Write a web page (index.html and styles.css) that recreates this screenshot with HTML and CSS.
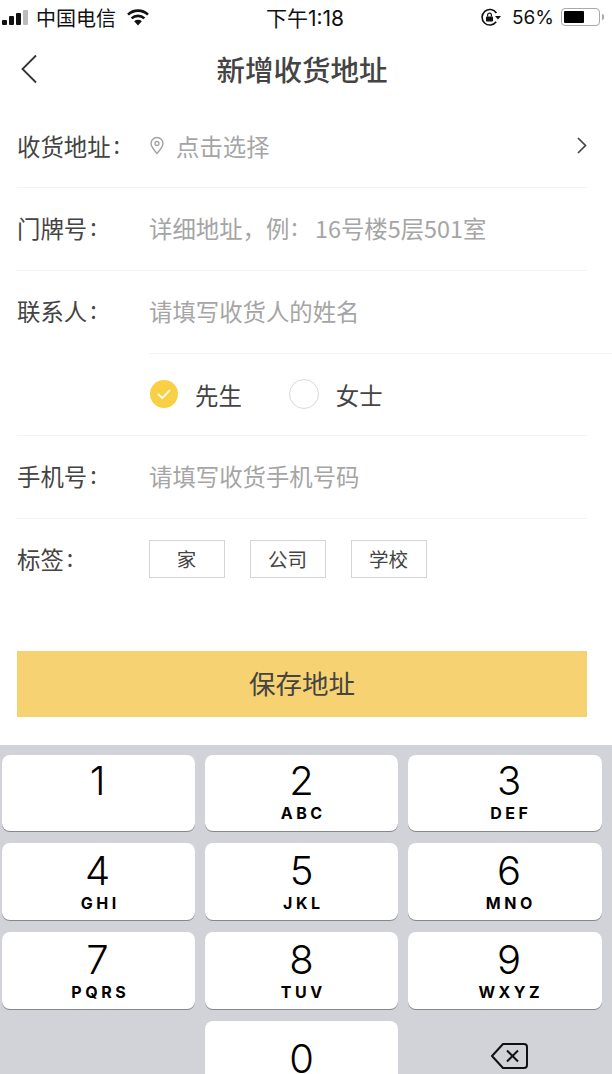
FILE: index.html
```html
<!DOCTYPE html>
<html lang="zh-CN">
<head>
  <meta charset="UTF-8" />
  <meta name="viewport" content="width=device-width, initial-scale=1.0"/>
  <title>新增收货地址</title>
  <link rel="stylesheet" href="styles.css">
</head>
<body>

  <div class="status-bar">
    <div class="status-left">
      <div class="signal">
        <span class="s1"></span><span class="s2"></span><span class="s3"></span><span class="s4"></span>
      </div>
      <span class="carrier">中国电信</span>
      <svg class="wifi" width="24" height="17" viewBox="0 0 24 17">
        <path d="M12 16.5 L8.2 12.2 A5.6 5.6 0 0 1 15.8 12.2 Z" fill="#111"/>
        <path d="M5.6 9.4 A9.4 9.4 0 0 1 18.4 9.4" fill="none" stroke="#111" stroke-width="2.6"/>
        <path d="M2 5.6 A14.6 14.6 0 0 1 22 5.6" fill="none" stroke="#111" stroke-width="2.6"/>
      </svg>
    </div>
    <div class="status-time">下午1:18</div>
    <div class="status-right">
      <svg class="lock" width="21" height="19" viewBox="0 0 21 19">
        <path d="M16.2 13.8 A7.8 7.8 0 1 1 16.4 5" fill="none" stroke="#111" stroke-width="1.6"/>
        <path d="M15 8 L21 8 L18 11.5 Z" fill="#111"/>
        <rect x="6" y="8.4" width="7" height="5.2" rx="0.8" fill="#111"/>
        <path d="M7.6 8.4 V7 A1.9 1.9 0 0 1 11.4 7 V8.4" fill="none" stroke="#111" stroke-width="1.2"/>
      </svg>
      <span class="battery-pct">56%</span>
      <div class="battery"><div class="battery-fill"></div></div>
      <span class="battery-tip"></span>
    </div>
  </div>

  <header class="nav">
    <svg class="back" width="18" height="30" viewBox="0 0 18 30">
      <path d="M16 1.5 L2.5 15 L16 28.5" fill="none" stroke="#333" stroke-width="1.8"/>
    </svg>
    <h1>新增收货地址</h1>
  </header>

  <div class="form">
    <div class="row">
      <div class="label">收货地址<span class="colon">:</span></div>
      <div class="value placeholder">
        <svg class="pin" width="16" height="19" viewBox="0 0 16 19">
          <path d="M8 17.5 C4.5 13.5 2 10.5 2 7.5 A6 6 0 0 1 14 7.5 C14 10.5 11.5 13.5 8 17.5 Z" fill="none" stroke="#a2a2a2" stroke-width="1.4"/>
          <circle cx="8" cy="7.5" r="2" fill="none" stroke="#a2a2a2" stroke-width="1.3"/>
        </svg>
        点击选择
      </div>
      <svg class="chevron" width="10" height="17" viewBox="0 0 10 17">
        <path d="M1 1 L8.5 8.5 L1 16" fill="none" stroke="#444" stroke-width="1.7"/>
      </svg>
    </div>
    <div class="row">
      <div class="label">门牌号<span class="colon">:</span></div>
      <div class="value placeholder">详细地址，例<span class="colon">:</span>16号楼5层501室</div>
    </div>
    <div class="row contact-row">
      <div class="label">联系人<span class="colon">:</span></div>
      <div class="value placeholder">请填写收货人的姓名</div>
    </div>
    <div class="contact-line"></div>
    <div class="row short-row">
      <div class="gender-list">
        <div class="gender">
          <span class="radio checked">
            <svg width="16" height="12" viewBox="0 0 16 12"><path d="M2 6 L6.3 10 L14 2" fill="none" stroke="#fff" stroke-width="1.8"/></svg>
          </span>
          <span class="gender-text">先生</span>
        </div>
        <div class="gender">
          <span class="radio"></span>
          <span class="gender-text">女士</span>
        </div>
      </div>
    </div>
    <div class="row">
      <div class="label">手机号<span class="colon">:</span></div>
      <div class="value placeholder">请填写收货手机号码</div>
    </div>
    <div class="row short-row no-line">
      <div class="label">标签<span class="colon">:</span></div>
      <div class="tags">
        <span class="tag">家</span>
        <span class="tag">公司</span>
        <span class="tag">学校</span>
      </div>
    </div>
  </div>

  <button class="save-btn">保存地址</button>

  <div class="keyboard">
    <div class="key"><span class="num">1</span></div>
    <div class="key"><span class="num">2</span><span class="letters">ABC</span></div>
    <div class="key key-right"><span class="num">3</span><span class="letters">DEF</span></div>
    <div class="key"><span class="num">4</span><span class="letters">GHI</span></div>
    <div class="key"><span class="num">5</span><span class="letters">JKL</span></div>
    <div class="key key-right"><span class="num">6</span><span class="letters">MNO</span></div>
    <div class="key"><span class="num">7</span><span class="letters">PQRS</span></div>
    <div class="key"><span class="num">8</span><span class="letters">TUV</span></div>
    <div class="key key-right"><span class="num">9</span><span class="letters">WXYZ</span></div>
    <div class="key-empty"></div>
    <div class="key key-zero"><span class="num">0</span></div>
    <div class="key-empty delete">
      <svg width="40" height="28" viewBox="0 0 40 28">
        <path d="M13 2 H34 A3 3 0 0 1 37 5 V23 A3 3 0 0 1 34 26 H13 L2 14 Z" fill="none" stroke="#111" stroke-width="2" stroke-linejoin="round"/>
        <path d="M17 8.5 L28 19.5 M28 8.5 L17 19.5" stroke="#111" stroke-width="2"/>
      </svg>
    </div>
  </div>

</body>
</html>
```

FILE: styles.css
```css
html, body {
  margin: 0;
  height: 1074px;
  overflow: hidden;
}
body {
  background-color: #fff;
  font-family: "Noto Sans CJK SC", "Liberation Sans", sans-serif;
  color: #444;
}

/* status bar */
.status-bar {
  height: 34px;
  display: flex;
  align-items: center;
  justify-content: space-between;
  color: #111;
  font-size: 20px;
}
.status-left, .status-right {
  width: 210px;
  display: flex;
  align-items: center;
}
.status-right {
  justify-content: flex-end;
}
.signal {
  display: flex;
  align-items: flex-end;
  gap: 2px;
  margin-left: 2px;
}
.signal span {
  width: 5px;
  background-color: #111;
  border-radius: 1px;
}
.signal .s1 { height: 5px; }
.signal .s2 { height: 9px; }
.signal .s3 { height: 12px; }
.signal .s4 { height: 15px; background-color: #bbb; }
.carrier {
  margin-left: 8px;
}
.wifi {
  margin-left: 10px;
}
.status-time {
  font-family: "Inter", "Noto Sans CJK SC", sans-serif;
  font-size: 21px;
  margin-left: -2px;
}
.lock {
  margin-right: 11px;
}
.battery-pct {
  font-family: "Inter", sans-serif;
  font-size: 19px;
  margin-right: 7px;
}
.battery {
  width: 33px;
  height: 12px;
  padding: 2px;
  border: 1.5px solid #aaa;
  border-radius: 4px;
}
.battery-fill {
  width: 60%;
  height: 100%;
  background-color: #000;
  border-radius: 1px;
}
.battery-tip {
  width: 2px;
  height: 6px;
  background-color: #aaa;
  margin: 0 8px 0 2px;
  border-radius: 0 2px 2px 0;
}

/* nav */
.nav {
  height: 71px;
  padding-bottom: 3px;
  box-sizing: border-box;
  position: relative;
  display: flex;
  align-items: center;
  justify-content: center;
}
.nav h1 {
  margin: 0 8px 0 0;
  font-size: 28.5px;
  font-weight: 500;
  color: #444;
}
.back {
  position: absolute;
  left: 20px;
  top: 20px;
}

/* form */
.form {
  padding-left: 17px;
}
.row {
  height: 83px;
  margin-right: 25px;
  padding-bottom: 3px;
  border-bottom: 1px solid #f4f4f4;
  box-sizing: border-box;
  display: flex;
  align-items: center;
  font-size: 23.4px;
}
.row:first-child {
  padding-bottom: 1px;
}
.short-row {
  height: 82px;
}
.no-line {
  border-bottom: 0;
}
.contact-row {
  height: 82px;
  border-bottom: 0;
}
.contact-line {
  height: 1px;
  margin: 0 0 0 132px;
  background-color: #f4f4f4;
}
.label {
  width: 132px;
  color: #444;
}
.colon {
  display: inline-block;
  width: 23.4px;
  padding-left: 3px;
  box-sizing: border-box;
  position: relative;
  top: -2px;
}
.value {
  display: flex;
  align-items: center;
  flex: 1;
}
.placeholder {
  color: #a5a5a5;
}
.placeholder .colon {
  width: 25.6px;
  padding-left: 2px;
}
.pin {
  margin-right: 11px;
}
.gender-list {
  display: flex;
  gap: 47px;
  padding-left: 133px;
  margin-top: 2px;
}
.gender {
  display: flex;
  align-items: center;
  gap: 17px;
  color: #444;
}
.gender-text {
  margin-top: 2px;
}
.radio {
  width: 28px;
  height: 28px;
  border: 1px solid #d8d8d8;
  border-radius: 50%;
  display: flex;
  align-items: center;
  justify-content: center;
}
.radio.checked {
  background-color: #f8d046;
  border: 0;
}
.tags {
  display: flex;
  gap: 25px;
  margin-top: 1px;
}
.tag {
  width: 76px;
  height: 38px;
  padding: 0 1px 2px 0;
  box-sizing: border-box;
  border: 1px solid #d4d4d4;
  display: flex;
  align-items: center;
  justify-content: center;
  font-size: 19.5px;
  color: #444;
}

/* save button */
.save-btn {
  display: block;
  width: 570px;
  height: 66px;
  margin: 50px 0 0 17px;
  padding: 0 0 3px;
  border: 0;
  background-color: #f7d272;
  color: #444;
  font-family: inherit;
  font-size: 26.5px;
}

/* number keyboard */
.keyboard {
  margin-top: 28px;
  height: 329px;
  padding: 9.8px 10px 0 2px;
  box-sizing: border-box;
  background-color: #d1d3d9;
  display: grid;
  grid-template-columns: 193px 193px 194px;
  grid-auto-rows: 76.6px;
  column-gap: 10px;
  row-gap: 12px;
}
.key {
  background-color: #fff;
  border-radius: 8px;
  box-shadow: 0 1px 0 #85878c;
  display: flex;
  flex-direction: column;
  align-items: center;
  color: #000;
  font-family: "Inter", "Liberation Sans", sans-serif;
}
.key-right {
  padding-left: 8px;
  box-sizing: border-box;
}
.key-zero {
  padding-top: 10px;
  box-sizing: border-box;
}
.num {
  font-size: 40px;
  font-weight: 300;
  line-height: 46px;
  margin-top: 3px;
}
.key:nth-child(n+4) .num {
  margin-top: 5px;
}
.key:nth-child(3n+1) .num {
  margin-right: 2px;
}
.letters {
  font-size: 16px;
  font-weight: 700;
  letter-spacing: 3.5px;
  line-height: 18px;
  margin-right: -3.5px;
}
.delete {
  display: flex;
  justify-content: center;
  padding: 21px 0 0 9px;
}
```
